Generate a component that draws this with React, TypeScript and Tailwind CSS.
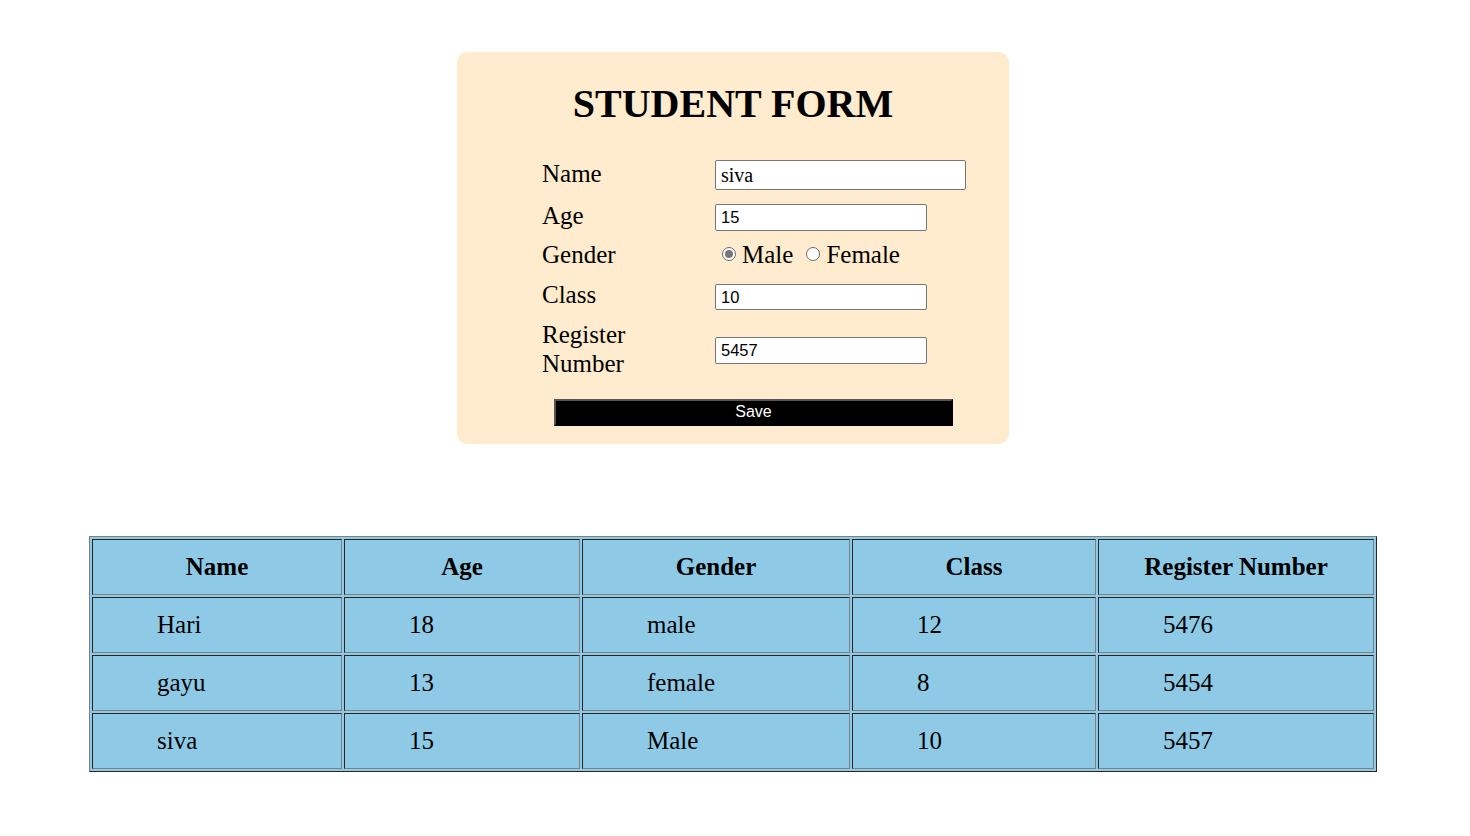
import React from "react";

const rows = [
  ["Hari", "18", "male", "12", "5476"],
  ["gayu", "13", "female", "8", "5454"],
  ["siva", "15", "Male", "10", "5457"],
];
const heads = ["Name", "Age", "Gender", "Class", "Register Number"];
const widths = ["w-[250px]", "w-[236px]", "w-[268px]", "w-[244px]", "w-[276px]"];

const cell =
  "p-0 pb-[2px] h-[56px] border border-t-[#262626] border-l-[#262626] border-r-[#808080] border-b-[#808080]";

function Radio({ checked }: { checked?: boolean }) {
  return (
    <span className="w-[14px] h-[14px] rounded-full border border-[#6b6b6b] bg-white flex items-center justify-center shrink-0">
      {checked && <span className="w-[8px] h-[8px] rounded-full bg-[#767676]" />}
    </span>
  );
}

const inputCls =
  "border border-[#767676] rounded-[2px] bg-white px-[5px] outline-none text-black";

export default function App() {
  return (
    <div className="min-h-[836px] bg-white font-['Liberation_Serif',serif] text-black pt-[52px]">
      <div className="ml-[457px] w-[552px] h-[392px] rounded-[10px] bg-[#ffebcd] pt-[29px]">
        <h1 className="text-center text-[40px] leading-[46px] font-bold">STUDENT FORM</h1>
        <div className="mt-[27px] ml-[85px] text-[25px] leading-[29px]">
          <div className="flex items-center h-[42px]">
            <div className="w-[173px] pb-[3px]">Name</div>
            <input
              readOnly
              value="siva"
              className={`${inputCls} w-[251px] h-[30px] text-[20px] font-['Liberation_Serif',serif]`}
            />
          </div>
          <div className="flex items-center h-[42px]">
            <div className="w-[173px] pb-[3px]">Age</div>
            <input
              readOnly
              value="15"
              className={`${inputCls} w-[212px] h-[27px] text-[16.5px] font-['Liberation_Sans',Arial,sans-serif]`}
            />
          </div>
          <div className="flex items-center h-[36px] pb-[4px]">
            <div className="w-[173px]">Gender</div>
            <div className="flex items-center pl-[7px]">
              <Radio checked />
              <span className="ml-[6px]">Male</span>
              <span className="ml-[13px]">
                <Radio />
              </span>
              <span className="ml-[6px]">Female</span>
            </div>
          </div>
          <div className="flex items-center h-[46px]">
            <div className="w-[173px] pb-[5px]">Class</div>
            <input
              readOnly
              value="10"
              className={`${inputCls} w-[212px] h-[26px] text-[16.5px] font-['Liberation_Sans',Arial,sans-serif]`}
            />
          </div>
          <div className="flex items-center h-[60px]">
            <div className="w-[173px] pr-[30px] pb-[3px]">Register Number</div>
            <input
              readOnly
              value="5457"
              className={`${inputCls} w-[212px] h-[27px] text-[16.5px] font-['Liberation_Sans',Arial,sans-serif]`}
            />
          </div>
        </div>
        <button className="mt-[19px] ml-[97px] w-[399px] h-[27px] bg-black text-white text-[16px] leading-[20px] pb-[2px] font-['Liberation_Sans',Arial,sans-serif] border-2 border-t-[#555] border-l-[#555] border-r-black border-b-black">
          Save
        </button>
      </div>
      <table className="mt-[92px] ml-[89px] table-fixed border-separate border-spacing-[2px] bg-[#8ecae6] border border-t-[#808080] border-l-[#808080] border-r-[#262626] border-b-[#262626] text-[25px] leading-[29px]">
        <thead>
          <tr>
            {heads.map((h, i) => (
              <th key={h} className={`${cell} ${widths[i]} font-bold text-center`}>
                {h}
              </th>
            ))}
          </tr>
        </thead>
        <tbody>
          {rows.map((r) => (
            <tr key={r[0]}>
              {r.map((v, i) => (
                <td key={i} className={`${cell} ${widths[i]} pl-[64px] text-left`}>
                  {v}
                </td>
              ))}
            </tr>
          ))}
        </tbody>
      </table>
    </div>
  );
}
